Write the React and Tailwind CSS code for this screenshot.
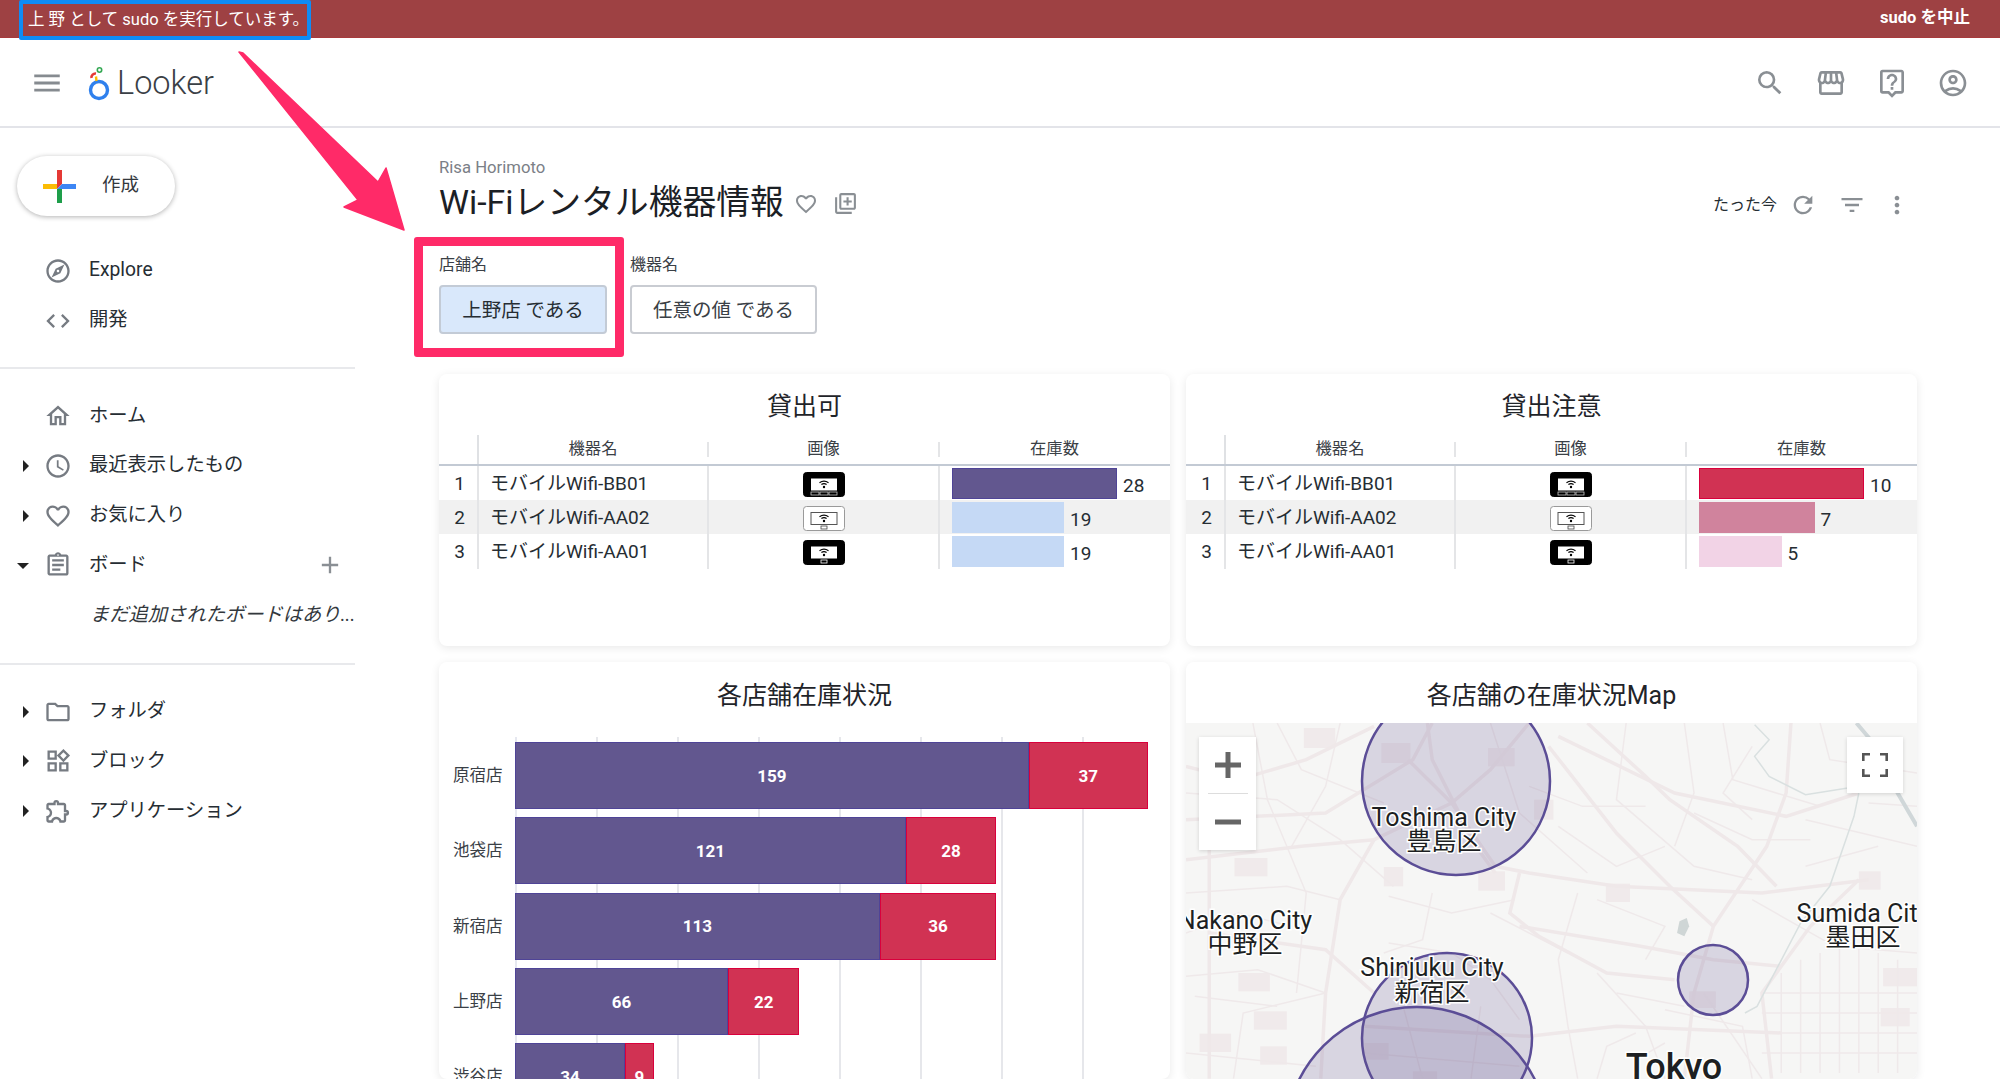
import {
  MdMenu,
  MdSearch,
  MdOutlineStorefront,
  MdOutlineLiveHelp,
  MdOutlineAccountCircle,
  MdOutlineExplore,
  MdCode,
  MdOutlineHome,
  MdOutlineAccessTime,
  MdFavoriteBorder,
  MdOutlineAssignment,
  MdOutlineFolder,
  MdOutlineWidgets,
  MdOutlineExtension,
  MdAdd,
  MdRefresh,
  MdFilterList,
  MdMoreVert,
  MdOutlineLibraryAdd,
} from "react-icons/md";

const availableRows = [
  { n: 1, name: "モバイルWifi-BB01", device: "black3", value: 28, bar: "bg-[#62578f] border border-[#4f4497]" },
  { n: 2, name: "モバイルWifi-AA02", device: "white", value: 19, bar: "bg-[#c5d9f5]" },
  { n: 3, name: "モバイルWifi-AA01", device: "black", value: 19, bar: "bg-[#c5d9f5]" },
];

const cautionRows = [
  { n: 1, name: "モバイルWifi-BB01", device: "black3", value: 10, bar: "bg-[#d13253] border border-[#d9003c]" },
  { n: 2, name: "モバイルWifi-AA02", device: "white", value: 7, bar: "bg-[#d0839d]" },
  { n: 3, name: "モバイルWifi-AA01", device: "black", value: 5, bar: "bg-[#f2d3e6]" },
];

const stores = [
  { name: "原宿店", a: 159, b: 37 },
  { name: "池袋店", a: 121, b: 28 },
  { name: "新宿店", a: 113, b: 36 },
  { name: "上野店", a: 66, b: 22 },
  { name: "渋谷店", a: 34, b: 9 },
];

// road data is in the coordinates of the map's stretched viewBox
const majorRoads = [
  "M12 320L120 360L260 300L400 200",
  "M60 560V1257",
  "M12 600L250 560L400 540",
  "M400 540L330 720L300 1000L290 1257",
  "M700 640L680 760L740 830L880 940L1020 960",
  "M760 260L900 520L1010 680L1100 800",
  "M780 230L1020 400L1250 470L1400 400",
  "M1260 190L1250 400L1210 560L1100 800L1060 1000L1040 1257",
  "M470 300L560 430L650 620L720 640L900 680L1200 700L1420 660",
  "M840 190L960 350L1010 420L1150 560L1230 680",
  "M12 480L300 460L480 300L520 190",
  "M400 1000L300 870L60 820",
  "M700 800L950 860L1100 900L1240 920",
  "M720 190L640 330L560 430L400 540",
  "M380 1100L720 1130L900 1100L1240 1120",
  "M510 190L520 300L610 560L650 640",
  "M1400 660L1300 800L1200 1000L1220 1257",
];

const minorRoads = [
  "M150 190L180 420L260 700L240 1000",
  "M12 700L220 680L330 720",
  "M12 950L160 930L300 1000",
  "M110 1257L130 1060L300 1000",
  "M640 190L700 460L840 640",
  "M920 190L900 420L1060 620L1180 660",
  "M1040 190L1060 400L1020 560",
  "M1120 190L1140 360L1320 440",
  "M1320 190L1340 300L1520 340",
  "M1290 480L1520 560",
  "M1180 720L1350 860L1520 880",
  "M820 700L780 900L800 1100L820 1257",
  "M640 760L800 880",
  "M860 940L960 1100L1000 1257",
  "M1080 1000L1200 1257",
  "M1240 940V1240M1280 900V1240M1320 880V1240M1360 860V1240M1400 860V1240M1440 880V1240M1480 900V1240",
  "M1200 1000H1520M1200 1060H1520M1200 1120H1520M1200 1180H1520",
  "M940 1120L880 1160L860 1257",
  "M1000 1150L940 1200",
  "M12 400L200 420L330 540L440 680",
  "M12 820L120 760L230 800",
  "M200 190L250 330L420 430",
  "M330 190L300 380L230 560",
  "M430 710L560 760L690 720",
  "M430 850L560 880L640 960L700 1080",
  "M520 700L500 840L420 880",
  "M720 380L830 440L960 440",
  "M780 500L900 620L1000 560",
  "M860 720L1000 800L960 900",
  "M1060 460L1180 540L1300 540",
  "M1180 260L1120 400L1180 480",
  "M1420 430L1520 440",
  "M1290 620L1440 560",
  "M1000 1050L1160 1100L1180 1257",
  "M900 1000L1040 1040",
  "M30 1010L200 1040M12 1180L280 1220",
  "M380 1180L700 1220M460 1040L500 1257M620 1040L600 1257",
];

const blocks = [
  [255, 205, 65, 60],
  [112, 595, 68, 55],
  [420, 622, 40, 58],
  [615, 635, 55, 58],
  [878, 672, 50, 55],
  [1400, 635, 45, 55],
  [120, 940, 65, 55],
  [152, 1055, 68, 55],
  [40, 1122, 65, 55],
  [165, 1160, 55, 55],
  [1450, 925, 70, 55],
  [1445, 1045, 60, 55],
  [415, 250, 60, 60],
  [635, 265, 55, 55],
  [730, 420, 40, 60],
  [1050, 995, 55, 50],
  [380, 1150, 50, 50],
  [480, 1235, 50, 25],
];

const mapLabels = [
  { x: 258, y: 103, text: "Toshima City" },
  { x: 258, y: 127, text: "豊島区" },
  { x: 59, y: 206, text: "Nakano City" },
  { x: 59, y: 230, text: "中野区" },
  { x: 246, y: 253, text: "Shinjuku City" },
  { x: 246, y: 278, text: "新宿区" },
  { x: 677, y: 199, text: "Sumida City" },
  { x: 677, y: 223, text: "墨田区" },
];

function Logo() {
  return (
    <svg width="22" height="36" viewBox="0 0 22 36" fill="none">
      <circle cx="11" cy="25" r="8.5" stroke="#2f80ed" strokeWidth="3.4" />
      <path d="M8 8.5A4 4 0 0 0 3.5 13" stroke="#e53935" strokeWidth="2.6" />
      <path d="M8 11.5L8.5 16" stroke="#fbbc04" strokeWidth="2.4" />
      <circle cx="11.5" cy="5" r="2.2" stroke="#34a853" strokeWidth="1.6" />
    </svg>
  );
}

function ColorPlus() {
  return (
    <svg width="33" height="33" viewBox="0 0 33 33">
      <rect x="14" y="0" width="5" height="14" fill="#e53935" />
      <rect x="19" y="14" width="14" height="5" fill="#3d86f4" />
      <rect x="14" y="19" width="5" height="14" fill="#1e9e4a" />
      <rect x="0" y="14" width="14" height="5" fill="#fbbc04" />
      <path d="M14 14H19L14 19Z" fill="#e53935" />
      <path d="M19 14V19H14Z" fill="#3d86f4" />
    </svg>
  );
}

function DeviceIcon({ kind }) {
  const dark = kind !== "white";
  const ink = dark ? "#ffffff" : "#444444";
  return (
    <svg width="42" height="25" viewBox="0 0 42 25">
      <rect
        x="0.5"
        y="0.5"
        width="41"
        height="24"
        rx="3"
        fill={dark ? "#000000" : "#ffffff"}
        stroke={dark ? "#000000" : "#9a9a9a"}
      />
      <rect x="8" y="6.5" width="26" height="12" fill="#ffffff" stroke={dark ? "none" : "#555555"} />
      <path d="M16.5 10.8Q21 7.6 25.5 10.8M18.4 12.6Q21 10.6 23.6 12.6" stroke="#000000" fill="none" strokeWidth="1.2" />
      <circle cx="21" cy="15" r="1.2" fill="#000000" />
      {kind === "black3" ? (
        <g fill="none" stroke={ink} strokeWidth="0.8" opacity="0.8">
          <rect x="8" y="20" width="8" height="3" />
          <rect x="17" y="20" width="8" height="3" />
          <rect x="26" y="20" width="8" height="3" />
        </g>
      ) : (
        <rect x="18" y="20" width="6" height="3" fill="none" stroke={ink} strokeWidth="0.8" />
      )}
    </svg>
  );
}

function Caret({ open }) {
  return (
    <span
      className={
        open
          ? "mt-[2px] h-0 w-0 border-x-[6px] border-t-[6px] border-x-transparent border-t-[#222]"
          : "h-0 w-0 border-y-[6px] border-l-[6px] border-y-transparent border-l-[#222]"
      }
    />
  );
}

function NavRow({ icon: Icon, label, caret, open, action }) {
  return (
    <div className="flex h-[49.7px] items-center text-[19.3px] text-[#262d33]">
      <span className="flex w-[44px] justify-end pr-[15px]">{caret && <Caret open={open} />}</span>
      <Icon className="h-[28px] w-[28px] text-[#767b82]" />
      <span className="ml-[17px] flex-1">{label}</span>
      {action}
    </div>
  );
}

function RankTable({ rows, max }) {
  return (
    <div>
      <div className="grid h-[29px] grid-cols-[38px_230px_231px_231px] grid-rows-[29px] text-[16.3px] leading-none text-[#3a4046]">
        <div />
        <div className="flex items-center justify-center border-l-2 border-[#dfe1e4]">機器名</div>
        <div className="flex h-[15px] items-center justify-center self-center border-l-2 border-[#e4e5e7]">画像</div>
        <div className="flex h-[15px] items-center justify-center self-center border-l-2 border-[#e4e5e7]">在庫数</div>
      </div>
      <div className="h-[2px] bg-[#c3cad4]" />
      {rows.map((row) => (
        <div
          key={row.n}
          className={
            "grid h-[34px] grid-cols-[38px_230px_231px_231px] text-[19px] text-[#262d33] " +
            (row.n === 2 ? "bg-[#f1f1f1]" : "bg-white")
          }
        >
          <div className="flex items-center justify-center pl-[3px] pt-[1px]">{row.n}</div>
          <div className="flex items-center border-l-2 border-[#e4e5e7] pl-[11px] pt-[1px]">{row.name}</div>
          <div className="flex items-center justify-center border-l-2 border-[#e4e5e7] pt-[2px]">
            <DeviceIcon kind={row.device} />
          </div>
          <div className="flex items-center border-l-2 border-[#e4e5e7] pl-[12px]">
            <div className={"h-[31px] " + row.bar} style={{ width: (row.value / max) * 165 }} />
            <span className="ml-[6px] pt-[6px]">{row.value}</span>
          </div>
        </div>
      ))}
    </div>
  );
}

function TableCard({ title, rows, max }) {
  return (
    <div className="h-[272px] rounded-[8px] bg-white shadow-[0_2px_10px_rgba(0,0,0,0.09)]">
      <div className="flex h-[61px] items-center justify-center pt-[4px] text-[25px] text-[#1f2429]">{title}</div>
      <RankTable rows={rows} max={max} />
    </div>
  );
}

function StoreChart() {
  return (
    <div className="relative h-[356px] overflow-hidden pt-[19px]">
      <div className="absolute bottom-0 left-[76px] top-[14px] flex border-l-2 border-[#e6e8f0]">
        {[1, 2, 3, 4, 5, 6, 7].map((i) => (
          <div key={i} className="w-[81px] border-r-2 border-[#e6e7eb]" />
        ))}
      </div>
      <div className="relative flex flex-col gap-[8.3px]">
        {stores.map((s) => (
          <div key={s.name} className="flex h-[67px] items-center">
            <div className="w-[76px] pl-[14px] pt-[2px] text-[16.5px] text-[#3a4046]">{s.name}</div>
            <div className="flex h-full text-[17px] font-bold text-white">
              <div
                className="flex items-center justify-center border border-[#4f4497] bg-[#62578f] pt-[2px]"
                style={{ width: s.a * 3.23 }}
              >
                {s.a}
              </div>
              <div
                className="flex items-center justify-center border border-[#d9003c] bg-[#d13253] pt-[2px]"
                style={{ width: s.b * 3.23 }}
              >
                {s.b}
              </div>
            </div>
          </div>
        ))}
      </div>
    </div>
  );
}

function MapPanel() {
  return (
    <div className="relative h-[356px] overflow-hidden bg-[#f6f6f5]">
      <svg
        className="absolute inset-0 h-full w-full"
        viewBox="12 190 1508 1068"
        preserveAspectRatio="none"
        fill="none"
      >
        {blocks.map(([x, y, w, h]) => (
          <rect key={x + "-" + y} x={x} y={y} width={w} height={h} fill="#f0eaeb" />
        ))}
        {minorRoads.map((d) => (
          <path key={d} d={d} stroke="#efe9ea" strokeWidth="1.5" vectorEffect="non-scaling-stroke" />
        ))}
        {majorRoads.map((d) => (
          <path key={d} d={d} stroke="#efe8e9" strokeWidth="3.5" vectorEffect="non-scaling-stroke" />
        ))}
        <path
          d="M1185 195L1215 240L1185 290L1215 350L1290 405L1400 380M1400 400L1390 470L1340 680L1280 790L1190 1040L1165 1060"
          stroke="#d9e0e0"
          strokeWidth="1.5"
          vectorEffect="non-scaling-stroke"
        />
        <path
          d="M1395 190L1430 250L1480 400L1520 500"
          stroke="#d0d7d9"
          strokeWidth="4"
          vectorEffect="non-scaling-stroke"
        />
        <path d="M1030 785L1045 775L1050 800L1040 830L1025 820Z" fill="#cfd6d6" />
      </svg>
      <svg className="absolute inset-0 h-full w-full" viewBox="0 0 731 356">
        <g fill="rgba(98,87,146,0.2)" stroke="#5b4d96" strokeWidth="2.5">
          <circle cx="270" cy="58" r="94" />
          <circle cx="261" cy="315" r="85" />
          <circle cx="231" cy="416" r="132" />
          <circle cx="527" cy="257" r="35" />
        </g>
        <g
          fill="#1d1f22"
          textAnchor="middle"
          stroke="#ffffff"
          strokeWidth="3"
          paintOrder="stroke"
          className="font-[family-name:Roboto,'Noto_Sans_CJK_JP',sans-serif]"
        >
          {mapLabels.map((l) => (
            <text key={l.text} x={l.x} y={l.y} fontSize="25">
              {l.text}
            </text>
          ))}
          <text x="488" y="356" fontSize="36" fontWeight="500">
            Tokyo
          </text>
        </g>
      </svg>
      <div className="absolute left-[13px] top-[14px] flex h-[113px] w-[57px] flex-col items-center bg-white shadow-[0_1px_4px_rgba(0,0,0,0.15)]">
        <div className="flex h-[56px] items-center justify-center">
          <svg width="26" height="26" viewBox="0 0 26 26" stroke="#666" strokeWidth="5">
            <path d="M13 0V26M0 13H26" />
          </svg>
        </div>
        <div className="h-px w-[40px] bg-[#ddd]" />
        <div className="flex h-[56px] items-center justify-center">
          <svg width="26" height="26" viewBox="0 0 26 26" stroke="#666" strokeWidth="5">
            <path d="M0 13H26" />
          </svg>
        </div>
      </div>
      <div className="absolute right-[14px] top-[14px] flex h-[56px] w-[56px] items-center justify-center bg-white shadow-[0_1px_4px_rgba(0,0,0,0.15)]">
        <svg width="26" height="24" viewBox="0 0 26 24" fill="none" stroke="#555" strokeWidth="2.6">
          <path d="M1.3 8V1.3H8M18 1.3H24.7V8M24.7 16V22.7H18M8 22.7H1.3V16" />
        </svg>
      </div>
    </div>
  );
}

export default function App() {
  return (
    <div className="relative h-[1079px] w-[2000px] overflow-hidden bg-white font-[family-name:Roboto,'Noto_Sans_CJK_JP',sans-serif]">
      {/* sudo banner */}
      <div className="flex h-[38px] items-start justify-between border-b border-[#a83a3c] bg-[#9e4143] text-white">
        <div className="relative z-10 ml-[19px] flex h-[40px] w-[292px] items-center whitespace-nowrap rounded-[2px] border-[4px] border-[#0f8cf5] pl-[5px] text-[16.5px]">
          上 野 として sudo を実行しています。
        </div>
        <div className="mr-[30px] flex h-[37px] items-center text-[16.5px] font-bold">sudo を中止</div>
      </div>

      {/* header */}
      <div className="flex h-[90px] items-center justify-between border-b-2 border-[#e3e4e9] bg-white pt-[2px]">
        <div className="flex items-center">
          <MdMenu className="ml-[30px] h-[34px] w-[34px] text-[#868b90]" />
          <span className="ml-[24px]">
            <Logo />
          </span>
          <span className="ml-[7px] text-[32.5px] font-light leading-none text-[#3a4046]">Looker</span>
        </div>
        <div className="mr-[31px] flex items-center gap-[29px] text-[#8a8f94]">
          <MdSearch className="h-[32px] w-[32px]" />
          <MdOutlineStorefront className="h-[32px] w-[32px]" />
          <MdOutlineLiveHelp className="h-[32px] w-[32px]" />
          <MdOutlineAccountCircle className="h-[32px] w-[32px]" />
        </div>
      </div>

      <div className="flex">
        {/* sidebar */}
        <aside className="w-[355px] shrink-0">
          <div className="pl-[17px] pt-[28px]">
            <div className="flex h-[60px] w-[158px] items-center rounded-full bg-white pl-[26px] shadow-[0_1px_5px_rgba(0,0,0,0.3)]">
              <ColorPlus />
              <span className="ml-[26px] text-[18.5px] text-[#33383d]">作成</span>
            </div>
          </div>
          <div className="mt-[30px]">
            <NavRow icon={MdOutlineExplore} label="Explore" />
            <NavRow icon={MdCode} label="開発" />
          </div>
          <div className="mt-[22px] h-[2px] bg-[#e8e9ec]" />
          <div className="mt-[22px]">
            <NavRow icon={MdOutlineHome} label="ホーム" />
            <NavRow icon={MdOutlineAccessTime} label="最近表示したもの" caret />
            <NavRow icon={MdFavoriteBorder} label="お気に入り" caret />
            <NavRow
              icon={MdOutlineAssignment}
              label="ボード"
              caret
              open
              action={<MdAdd className="mr-[11px] h-[28px] w-[28px] text-[#8a8f94]" />}
            />
            <div className="flex h-[49.7px] items-center whitespace-nowrap pl-[90px] text-[19.3px] italic text-[#33383d]">
              まだ追加されたボードはあり...
            </div>
          </div>
          <div className="mt-[23px] h-[2px] bg-[#e8e9ec]" />
          <div className="mt-[22px]">
            <NavRow icon={MdOutlineFolder} label="フォルダ" caret />
            <NavRow icon={MdOutlineWidgets} label="ブロック" caret />
            <NavRow icon={MdOutlineExtension} label="アプリケーション" caret />
          </div>
        </aside>

        {/* dashboard */}
        <main className="min-w-0 flex-1 pl-[84px] pr-[83px] pt-[30px]">
          <div className="h-[20px] text-[16.7px] leading-[20px] text-[#7b8087]">Risa Horimoto</div>
          <div className="mt-[5px] flex h-[40px] items-center justify-between">
            <div className="flex items-center pt-[1px]">
              <h1 className="text-[33.8px] font-normal text-[#1b2025]">Wi-Fiレンタル機器情報</h1>
              <MdFavoriteBorder className="ml-[10px] h-[24px] w-[24px] text-[#8a8f94]" />
              <MdOutlineLibraryAdd className="ml-[15px] h-[25px] w-[25px] text-[#8a8f94]" />
            </div>
            <div className="flex items-center pr-[6px] pt-[3px] text-[#8a8f94]">
              <span className="text-[16px] text-[#262d33]">たった今</span>
              <MdRefresh className="ml-[12px] h-[28px] w-[28px]" />
              <MdFilterList className="ml-[21px] h-[28px] w-[28px]" />
              <MdMoreVert className="ml-[17px] h-[28px] w-[28px]" />
            </div>
          </div>

          <div className="mt-[32px] flex gap-[23px]">
            <div>
              <div className="h-[20px] text-[16px] leading-[20px] text-[#3a4046]">店舗名</div>
              <div className="mt-[10px] flex h-[49px] w-[168px] items-center justify-center rounded-[4px] border-2 border-[#c3cbd6] bg-[#d9e8fb] pt-[3px] text-[19.5px] text-[#262d33]">
                上野店 である
              </div>
            </div>
            <div>
              <div className="h-[20px] text-[16px] leading-[20px] text-[#3a4046]">機器名</div>
              <div className="mt-[10px] flex h-[49px] w-[187px] items-center justify-center rounded-[4px] border-2 border-[#c9ccd2] bg-white pt-[3px] text-[19.5px] text-[#3a4046]">
                任意の値 である
              </div>
            </div>
          </div>

          <div className="mt-[40px] grid grid-cols-[731px_731px] gap-[16px]">
            <TableCard title="貸出可" rows={availableRows} max={28} />
            <TableCard title="貸出注意" rows={cautionRows} max={10} />
            <div className="rounded-[8px] bg-white shadow-[0_2px_10px_rgba(0,0,0,0.09)]">
              <div className="flex h-[61px] items-center justify-center pt-[7px] text-[25px] text-[#1f2429]">各店舗在庫状況</div>
              <StoreChart />
            </div>
            <div className="overflow-hidden rounded-[8px] bg-white shadow-[0_2px_10px_rgba(0,0,0,0.09)]">
              <div className="flex h-[61px] items-center justify-center pt-[7px] text-[25px] text-[#1f2429]">各店舗の在庫状況Map</div>
              <MapPanel />
            </div>
          </div>
        </main>
      </div>

      {/* annotation: pink frame and arrow drawn over the page */}
      <div className="pointer-events-none absolute left-[414px] top-[237px] h-[120px] w-[210px] rounded-[3px] border-[9px] border-[#ff2a68]" />
      <svg className="pointer-events-none absolute left-0 top-0" width="420" height="240" viewBox="0 0 420 240">
        <path
          d="M239 52L243 53L378 182L386 168L404 230L344 207L358 200Z"
          fill="#ff2a68"
          stroke="#ff2a68"
          strokeWidth="1.5"
          strokeLinejoin="round"
        />
      </svg>
    </div>
  );
}
